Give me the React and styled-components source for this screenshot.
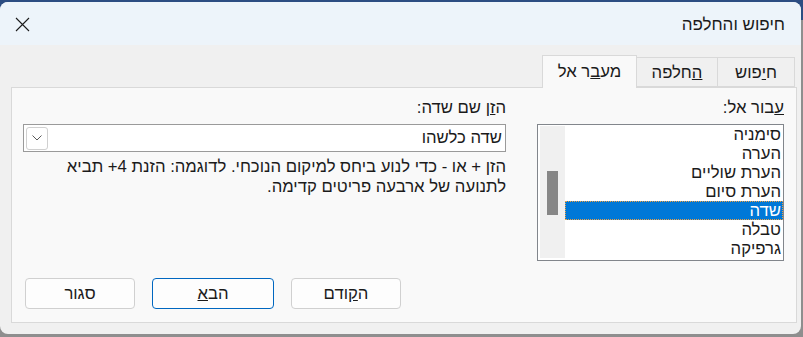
import React from "react";
import styled, { createGlobalStyle } from "styled-components";

const font = `"Liberation Sans", "DejaVu Sans", Arial, sans-serif`;
const textSize = "16.7px";

const GlobalStyle = createGlobalStyle`
  html, body {
    margin: 0;
    padding: 0;
    height: 100%;
  }
  body {
    background: linear-gradient(to bottom, #2c4d82 0, #2c4d82 20px, #8e8e8e 20px);
    font-family: ${font};
    overflow: hidden;
  }
`;

const items = ["סימניה", "הערה", "הערת שוליים", "הערת סיום", "שדה", "טבלה", "גרפיקה"];

export default function App() {
  return (
    <>
      <GlobalStyle />
      <Window dir="rtl">
        <TitleBar>
          <Title>חיפוש והחלפה</Title>
          <CloseButton aria-label="סגור">
            <svg width="15" height="15" viewBox="0 0 15 15">
              <path d="M1 1 L14 14 M14 1 L1 14" stroke="#1c1c1c" strokeWidth="1.1" fill="none" />
            </svg>
          </CloseButton>
        </TitleBar>
        <Body>
          <TabRow>
            <Tab $width={78}>ח<u>י</u>פוש</Tab>
            <Tab $width={82}><u>ה</u>חלפה</Tab>
            <Tab $width={95} $active>מע<u>ב</u>ר אל</Tab>
          </TabRow>
          <Panel>
            <Columns>
              <Column>
                <Label><u>ע</u>בור אל:</Label>
                <ListBox>
                  <ListItems>
                    {items.map((it) => (
                      <ListItem key={it} $selected={it === "שדה"}>{it}</ListItem>
                    ))}
                  </ListItems>
                  <ScrollTrack>
                    <ScrollThumb />
                  </ScrollTrack>
                </ListBox>
              </Column>
              <Column>
                <Label>ה<u>ז</u>ן שם שדה:</Label>
                <Combo>
                  <ComboText>שדה כלשהו</ComboText>
                  <ComboButton>
                    <svg width="10" height="6" viewBox="0 0 10 6">
                      <path d="M0.5 0.5 L5 5 L9.5 0.5" stroke="#5a5a5a" strokeWidth="1" fill="none" />
                    </svg>
                  </ComboButton>
                </Combo>
                <Help>
                  הזן + או - כדי לנוע ביחס למיקום הנוכחי. לדוגמה: הזנת 4+ תביא
                  <br />
                  לתנועה של ארבעה פריטים קדימה.
                </Help>
              </Column>
            </Columns>
            <ButtonRow>
              <Button $width={110}>ה<u>ק</u>ודם</Button>
              <Button $width={122} $focused>הב<u>א</u></Button>
              <Button $width={110}>סגור</Button>
            </ButtonRow>
          </Panel>
        </Body>
      </Window>
    </>
  );
}

const Window = styled.div`
  margin-top: 2px;
  width: 801px;
  height: 332px;
  border-radius: 8px;
  overflow: hidden;
  display: flex;
  flex-direction: column;
  background: #f0f0f0;
  color: #1b1b1b;
`;

const TitleBar = styled.div`
  height: 43px;
  flex: none;
  background: #edf4fa;
  display: flex;
  align-items: center;
  justify-content: space-between;
  padding: 0 16px 0 15px;
`;

const Title = styled.div`
  font-size: 17px;
  margin-top: 2px;
`;

const CloseButton = styled.div`
  width: 15px;
  height: 15px;
  display: flex;
  margin-top: 1px;
`;

const Body = styled.div`
  flex: 1;
  padding: 10px 4px 11px 11px;
  display: flex;
  flex-direction: column;
`;

const TabRow = styled.div`
  height: 32px;
  display: flex;
  align-items: flex-end;
  padding-right: 2px;
`;

const Tab = styled.div`
  width: ${(p) => p.$width}px;
  height: ${(p) => (p.$active ? 33 : 30)}px;
  box-sizing: border-box;
  margin-left: -1px;
  margin-bottom: ${(p) => (p.$active ? -1 : 0)}px;
  position: relative;
  z-index: ${(p) => (p.$active ? 2 : 1)};
  border: 1px solid #d9d9d9;
  border-bottom: ${(p) => (p.$active ? "none" : "1px solid #d9d9d9")};
  background: ${(p) => (p.$active ? "#f9f9f9" : "#f0f0f0")};
  display: flex;
  align-items: center;
  justify-content: center;
  font-size: ${textSize};
  padding-top: ${(p) => (p.$active ? 0 : 1)}px;
`;

const Panel = styled.div`
  flex: 1;
  background: #f9f9f9;
  border: 1px solid #d9d9d9;
  padding: 10px 12px 13px 11px;
  display: flex;
  flex-direction: column;
`;

const Columns = styled.div`
  display: grid;
  grid-template-columns: 247px 1fr;
  column-gap: 31px;
`;

const Column = styled.div`
  display: flex;
  flex-direction: column;
`;

const Label = styled.div`
  font-size: ${textSize};
  line-height: 20px;
  height: 20px;
  margin-bottom: 6px;
`;

const ListBox = styled.div`
  height: 137px;
  box-sizing: border-box;
  border: 1px solid #82868c;
  background: #fff;
  display: flex;
`;

const ListItems = styled.div`
  flex: 1;
  display: flex;
  flex-direction: column;
`;

const ListItem = styled.div`
  height: 19px;
  line-height: 19px;
  font-size: ${textSize};
  padding-right: 2px;
  white-space: nowrap;
  color: ${(p) => (p.$selected ? "#fff" : "#1b1b1b")};
  background: ${(p) => (p.$selected ? "#0078d7" : "transparent")};
  outline: ${(p) => (p.$selected ? "1px dotted #f0a040" : "none")};
  outline-offset: -1px;
`;

const ScrollTrack = styled.div`
  width: 25px;
  margin: 1px 0 2px 2px;
  background: #f0f0f0;
  display: flex;
  flex-direction: column;
`;

const ScrollThumb = styled.div`
  width: 11px;
  height: 44px;
  margin: 45px auto 0;
  background: #868686;
`;

const Combo = styled.div`
  height: 28px;
  box-sizing: border-box;
  border: 1px solid #9a9a9a;
  background: #fff;
  display: flex;
  align-items: center;
  padding: 0 3px 0 2px;
`;

const ComboText = styled.div`
  flex: 1;
  font-size: ${textSize};
`;

const ComboButton = styled.div`
  width: 22px;
  height: 23px;
  box-sizing: border-box;
  border: 1px solid #d0d0d0;
  border-radius: 3px;
  background: #fff;
  display: flex;
  align-items: center;
  justify-content: center;
`;

const Help = styled.div`
  margin-top: 5px;
  font-size: ${textSize};
  line-height: 20px;
  white-space: nowrap;
`;

const ButtonRow = styled.div`
  margin-top: 17px;
  display: flex;
  justify-content: flex-end;
  gap: 17px;
  padding-left: 2px;
`;

const Button = styled.div`
  width: ${(p) => p.$width}px;
  height: 31px;
  box-sizing: border-box;
  border: 1px solid ${(p) => (p.$focused ? "#0067c0" : "#d0d0d0")};
  border-radius: 4px;
  background: #fdfdfd;
  display: flex;
  align-items: center;
  justify-content: center;
  font-size: ${textSize};
`;
